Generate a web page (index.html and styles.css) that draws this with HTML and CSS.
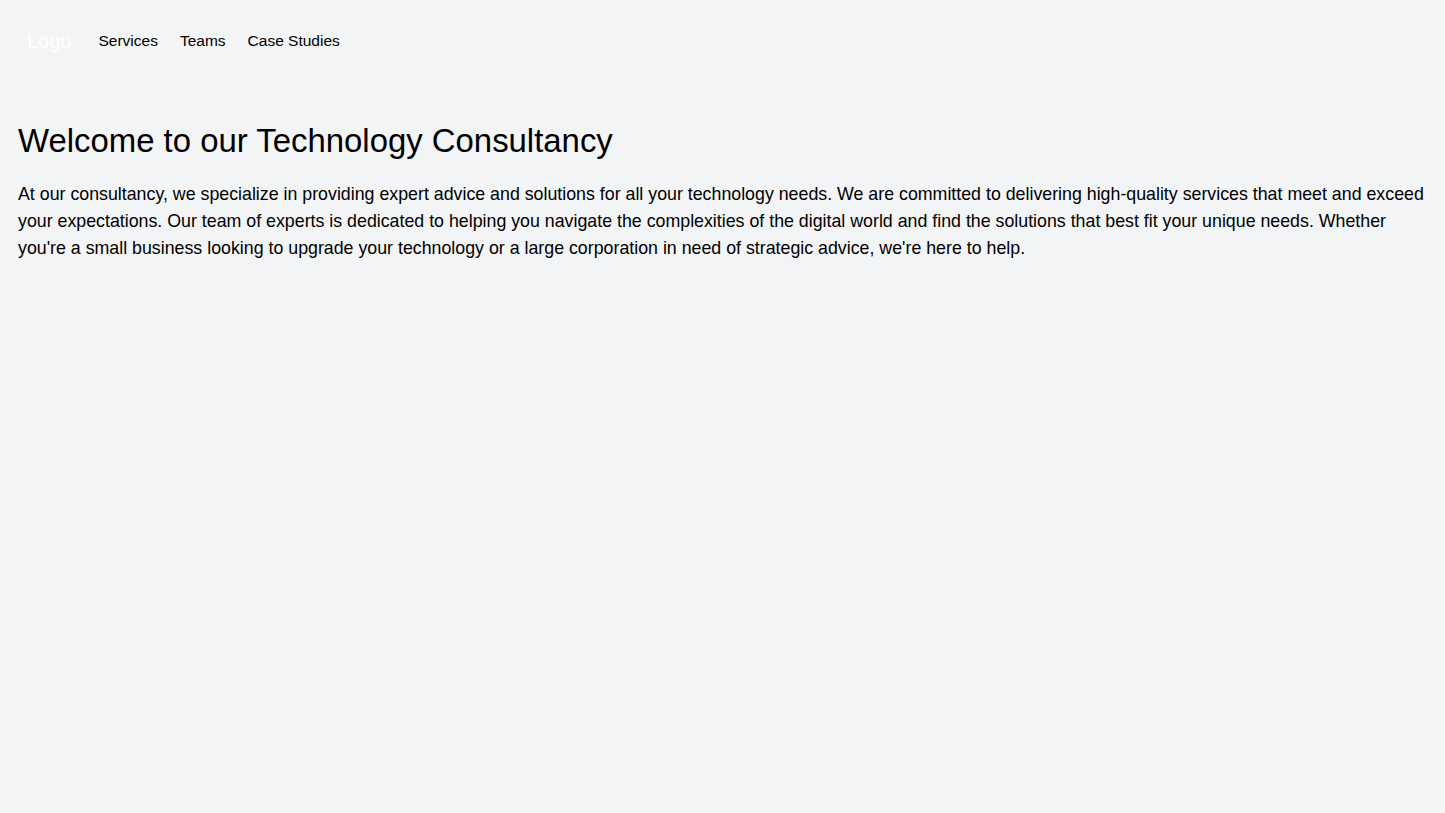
FILE: index.html
```html
<!DOCTYPE html>
<html>
<head>
<meta charset="utf-8">
<link rel="stylesheet" href="styles.css">
</head>
<body>
<nav class="nav">
  <span class="logo">Logo</span>
  <a class="link" href="#">Services</a>
  <a class="link" href="#">Teams</a>
  <a class="link" href="#">Case Studies</a>
</nav>
<main class="main">
  <h1 class="title">Welcome to our Technology Consultancy</h1>
  <p class="text">At our consultancy, we specialize in providing expert advice and solutions for all your technology needs. We are committed to delivering high-quality services that meet and exceed your expectations. Our team of experts is dedicated to helping you navigate the complexities of the digital world and find the solutions that best fit your unique needs. Whether you're a small business looking to upgrade your technology or a large corporation in need of strategic advice, we're here to help.</p>
</main>
</body>
</html>
```
FILE: styles.css
```css
html, body { margin: 0; padding: 0; }
body { background: #f3f4f6; color: #000; font-family: "Liberation Sans", Arial, sans-serif; min-height: 813px; }
.nav { display: flex; align-items: center; padding: 24px 27px; gap: 22px; height: 34px; }
.logo { color: #fff; font-size: 20px; margin-right: 5px; }
.link { color: #000; text-decoration: none; font-size: 15.5px; }
.main { padding: 41px 18px; }
.title { font-size: 32.9px; font-weight: 400; line-height: 36px; margin: 0 0 22px; }
.text { font-size: 17.8px; line-height: 27px; margin: 0; }
```
